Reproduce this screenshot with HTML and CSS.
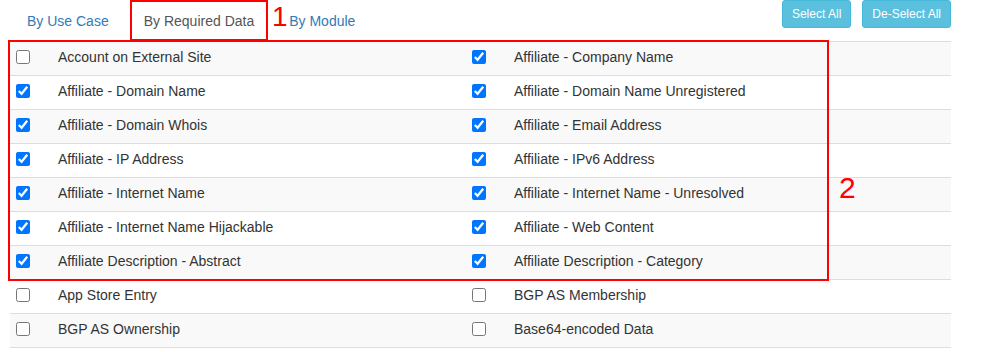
FILE: index.html
```html
<!DOCTYPE html>
<html lang="en">
<head>
    <meta charset="UTF-8">
    <title>Required Data</title>
    <link rel="stylesheet" href="styles.css">
</head>
<body>
    <div class="page">
        <div class="toolbar">
            <ul class="tabs">
                <li><a href="#">By Use Case</a></li>
                <li class="active"><a href="#">By Required Data</a></li>
                <li><a href="#">By Module</a></li>
            </ul>
            <span class="marker marker-1">1</span>
            <div class="actions">
                <button class="btn">Select All</button>
                <button class="btn">De-Select All</button>
            </div>
        </div>

        <div class="list">
            <div class="row">
                <span class="cb"><input type="checkbox"></span><span class="label">Account on External Site</span>
                <span class="cb"><input type="checkbox" checked></span><span class="label">Affiliate - Company Name</span>
            </div>
            <div class="row">
                <span class="cb"><input type="checkbox" checked></span><span class="label">Affiliate - Domain Name</span>
                <span class="cb"><input type="checkbox" checked></span><span class="label">Affiliate - Domain Name Unregistered</span>
            </div>
            <div class="row">
                <span class="cb"><input type="checkbox" checked></span><span class="label">Affiliate - Domain Whois</span>
                <span class="cb"><input type="checkbox" checked></span><span class="label">Affiliate - Email Address</span>
            </div>
            <div class="row">
                <span class="cb"><input type="checkbox" checked></span><span class="label">Affiliate - IP Address</span>
                <span class="cb"><input type="checkbox" checked></span><span class="label">Affiliate - IPv6 Address</span>
            </div>
            <div class="row">
                <span class="cb"><input type="checkbox" checked></span><span class="label">Affiliate - Internet Name</span>
                <span class="cb"><input type="checkbox" checked></span><span class="label">Affiliate - Internet Name - Unresolved</span>
            </div>
            <div class="row">
                <span class="cb"><input type="checkbox" checked></span><span class="label">Affiliate - Internet Name Hijackable</span>
                <span class="cb"><input type="checkbox" checked></span><span class="label">Affiliate - Web Content</span>
            </div>
            <div class="row">
                <span class="cb"><input type="checkbox" checked></span><span class="label">Affiliate Description - Abstract</span>
                <span class="cb"><input type="checkbox" checked></span><span class="label">Affiliate Description - Category</span>
            </div>
            <div class="row">
                <span class="cb"><input type="checkbox"></span><span class="label">App Store Entry</span>
                <span class="cb"><input type="checkbox"></span><span class="label">BGP AS Membership</span>
            </div>
            <div class="row">
                <span class="cb"><input type="checkbox"></span><span class="label">BGP AS Ownership</span>
                <span class="cb"><input type="checkbox"></span><span class="label">Base64-encoded Data</span>
            </div>

            <!-- annotation overlay -->
            <div class="highlight"></div>
            <span class="marker marker-2">2</span>
        </div>
    </div>
</body>
</html>
```

FILE: styles.css
```css
body {
    margin: 0;
    font-family: "Liberation Sans", Arial, sans-serif;
    font-size: 14px;
    color: #333;
    background: #fff;
}

.page {
    width: 941px;
    padding-left: 10px;
}

.toolbar {
    position: relative;
    display: flex;
    justify-content: space-between;
    align-items: flex-start;
    height: 41px;
}

.tabs {
    display: flex;
    gap: 7px;
    list-style: none;
    margin: 0 0 0 3px;
    padding: 0;
}

.tabs a {
    display: block;
    height: 41px;
    line-height: 39px;
    padding: 0 12px;
    border: 2px solid transparent;
    box-sizing: border-box;
    color: #337ab7;
    text-decoration: none;
}

.tabs .active a {
    color: #555;
    border-color: #f00;
    background: #fff;
}

.actions {
    display: flex;
    gap: 11px;
}

.btn {
    height: 28px;
    padding: 0 9px;
    font-family: "Liberation Sans", Arial, sans-serif;
    font-size: 12px;
    color: #fff;
    background: #5bc0de;
    border: 1px solid #46b8da;
    border-radius: 3px;
    cursor: pointer;
}

.marker {
    position: absolute;
    font-size: 28px;
    line-height: 28px;
    color: #f00;
}

.marker-1 {
    left: 262px;
    top: 3px;
}

.marker-2 {
    left: 829px;
    top: 132px;
    font-size: 30px;
    line-height: 30px;
}

.list {
    position: relative;
    border-bottom: 1px solid #ddd;
}

.row {
    display: grid;
    grid-template-columns: 40px 416px 40px 1fr;
    align-items: center;
    height: 34px;
    padding-bottom: 3px;
    box-sizing: border-box;
    border-top: 1px solid #ddd;
}

.row:nth-child(odd) {
    background: #f9f9f9;
}

.cb {
    display: flex;
    align-items: center;
    padding-left: 6px;
}

.cb input {
    width: 14px;
    height: 14px;
    margin: 0;
}

.label {
    padding-left: 8px;
}

.highlight {
    position: absolute;
    left: -2px;
    top: -1px;
    width: 821px;
    height: 241px;
    border: 2px solid #f00;
    box-sizing: border-box;
}
```
